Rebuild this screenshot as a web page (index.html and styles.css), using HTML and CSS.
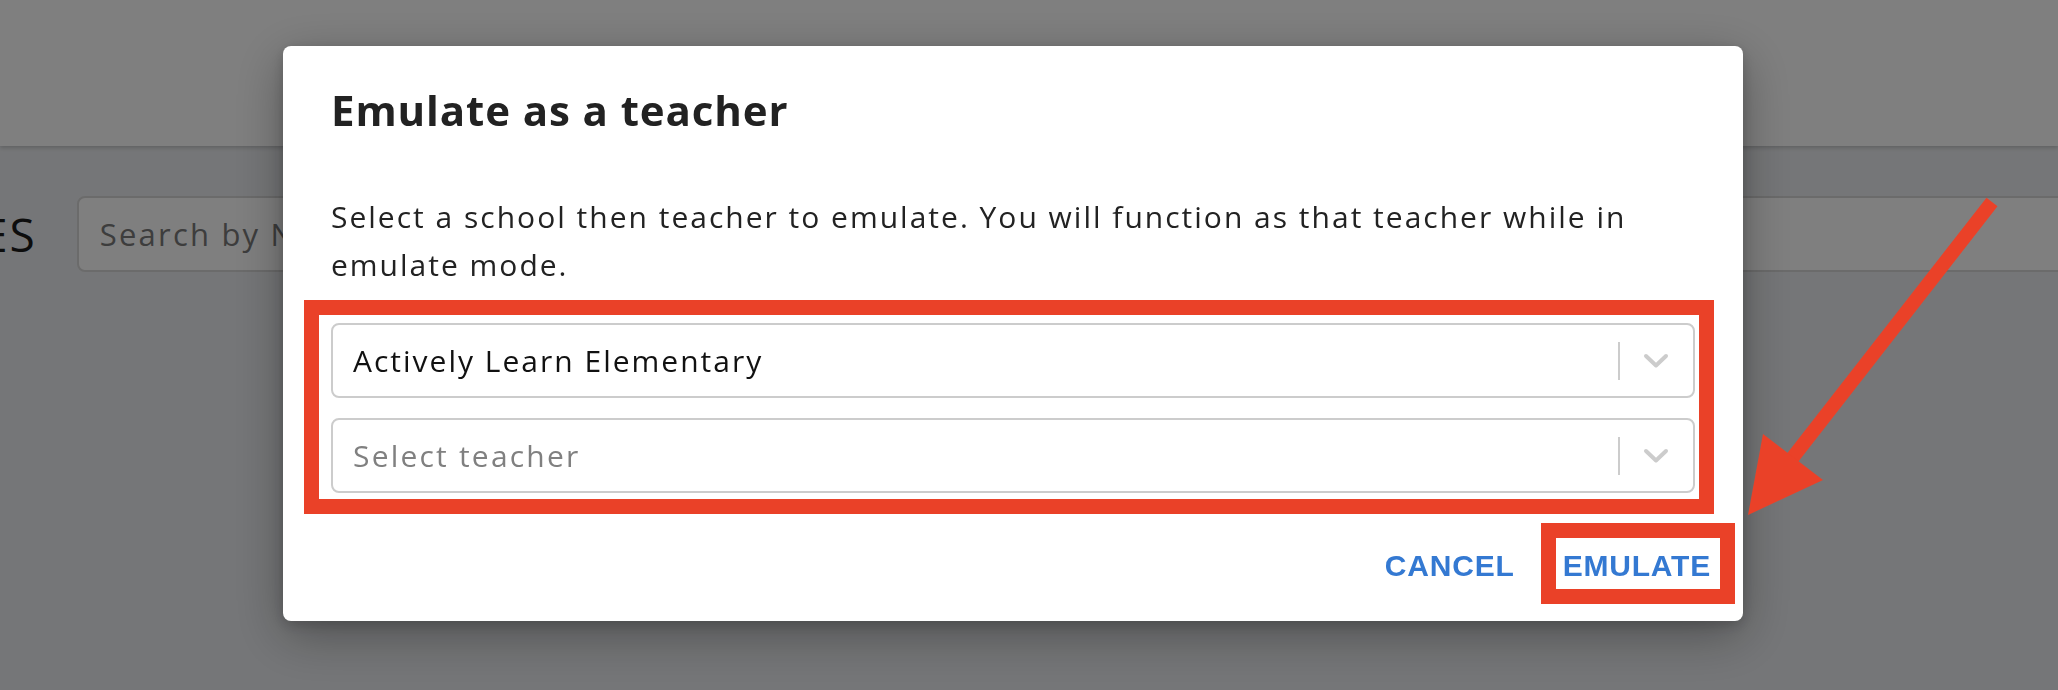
FILE: index.html
```html
<!DOCTYPE html>
<html lang="en">
<head>
<meta charset="utf-8">
<title>Emulate as a teacher</title>
<link rel="stylesheet" href="styles.css">
</head>
<body>
  <div class="page">
    <header class="topbar"></header>
    <div class="toolbar">
      <h1 class="page-title">ES</h1>
      <input class="search" type="text" placeholder="Search by Name or Email">
    </div>
  </div>

  <div class="backdrop"></div>

  <div class="modal" role="dialog" aria-labelledby="dlg-title">
    <h2 class="modal-title" id="dlg-title">Emulate as a teacher</h2>
    <div class="modal-body">
      <p class="modal-desc">Select a school then teacher to emulate. You will function as that teacher while in emulate mode.</p>
      <div class="select-stack">
        <div class="select">
          <span class="select-value">Actively Learn Elementary</span>
          <span class="select-sep"></span>
          <svg class="select-chevron" viewBox="0 0 26 16" aria-hidden="true"><path d="M3 3 L13 12.5 L23 3"/></svg>
        </div>
        <div class="select">
          <span class="select-value placeholder">Select teacher</span>
          <span class="select-sep"></span>
          <svg class="select-chevron" viewBox="0 0 26 16" aria-hidden="true"><path d="M3 3 L13 12.5 L23 3"/></svg>
        </div>
      </div>
    </div>
    <div class="modal-footer">
      <button class="btn" type="button">CANCEL</button>
      <button class="btn" type="button">EMULATE</button>
    </div>
    <div class="mark mark-selects"></div>
    <div class="mark mark-emulate"></div>
  </div>

  <svg class="annot-arrow" width="2058" height="690" viewBox="0 0 2058 690" aria-hidden="true">
    <line x1="1992" y1="202" x2="1790" y2="461" />
    <polygon points="1763,434 1823,480 1748,515" />
  </svg>
</body>
</html>
```

FILE: styles.css
```css
* { box-sizing: border-box; }

html, body {
  margin: 0;
  padding: 0;
  width: 2058px;
  height: 690px;
  overflow: hidden;
}

body {
  background: #ebedf0;
  font-family: "Open Sans", "Noto Sans", sans-serif;
  color: #1a1a1a;
}

.page {
  display: flex;
  flex-direction: column;
}

.topbar {
  height: 146px;
  background: #ffffff;
  box-shadow: 0 2px 4px rgba(0, 0, 0, 0.18);
}

.toolbar {
  margin-top: 50px;
  display: flex;
  align-items: center;
  gap: 40px;
}

.page-title {
  margin: 0 0 0 -18px;
  font-weight: 400;
  font-size: 46px;
  line-height: 56px;
  letter-spacing: 2px;
  color: #1a1a1a;
}

.search {
  flex: 1;
  height: 76px;
  margin-right: -40px;
  padding: 0 21px;
  border: 2px solid #d6d6d6;
  border-radius: 8px;
  background: #ffffff;
  font-family: "Open Sans", sans-serif;
  font-size: 31px;
  letter-spacing: 2.2px;
  color: #1a1a1a;
}

.search::placeholder { color: #7a7a7a; }

.backdrop {
  position: fixed;
  inset: 0;
  background: rgba(0, 0, 0, 0.5);
}

.modal {
  position: fixed;
  left: 283px;
  top: 46px;
  width: 1460px;
  background: #ffffff;
  border-radius: 8px;
  box-shadow: 0 14px 50px rgba(0, 0, 0, 0.32), 0 4px 14px rgba(0, 0, 0, 0.18);
}

.modal-title {
  margin: 0;
  padding: 36px 48px 0;
  font-weight: 700;
  font-size: 42px;
  line-height: 56px;
  letter-spacing: 0.9px;
  color: #222222;
}

.modal-body {
  padding: 55px 48px 0;
}

.modal-desc {
  margin: 0;
  font-size: 30px;
  line-height: 48px;
  letter-spacing: 2px;
  color: #222222;
}

.select-stack {
  margin-top: 34px;
  display: flex;
  flex-direction: column;
  gap: 20px;
}

.select {
  height: 75px;
  display: flex;
  align-items: center;
  border: 2px solid #cccccc;
  border-radius: 8px;
  padding: 0 24px 0 20px;
}

.select-value {
  flex: 1;
  font-size: 30px;
  letter-spacing: 2px;
  color: #111111;
}

.select-value.placeholder {
  color: #808080;
  letter-spacing: 2.2px;
}

.select-sep {
  width: 2px;
  height: 38px;
  background: #cccccc;
}

.select-chevron {
  width: 26px;
  height: 16px;
  margin-left: 23px;
  fill: none;
  stroke: #cccccc;
  stroke-width: 4;
  stroke-linecap: round;
  stroke-linejoin: round;
}

.modal-footer {
  display: flex;
  justify-content: flex-end;
  gap: 24px;
  padding: 45px 20px 27px;
}

.btn {
  height: 56px;
  padding: 0 12px;
  border: 0;
  background: transparent;
  font-family: "Liberation Sans", Arial, sans-serif;
  font-weight: 700;
  font-size: 30px;
  line-height: 56px;
  letter-spacing: 0.8px;
  color: #3479d2;
}

.mark {
  position: absolute;
  border: 15px solid #ea4128;
}

.mark-selects {
  left: 21px;
  top: 254px;
  width: 1410px;
  height: 214px;
}

.mark-emulate {
  left: 1258px;
  top: 477px;
  width: 194px;
  height: 81px;
}

.annot-arrow {
  position: fixed;
  left: 0;
  top: 0;
}

.annot-arrow line {
  stroke: #ea4128;
  stroke-width: 14;
}

.annot-arrow polygon {
  fill: #ea4128;
}
```
